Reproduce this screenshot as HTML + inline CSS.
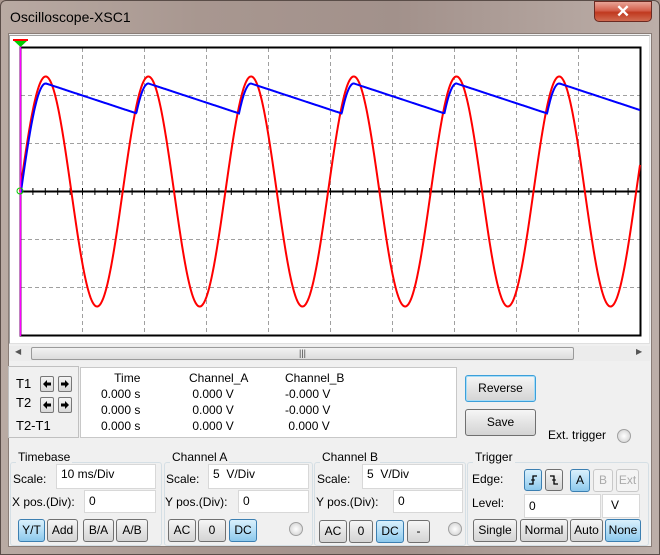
<!DOCTYPE html>
<html><head><meta charset="utf-8"><style>
*{box-sizing:border-box;margin:0;padding:0}
body{width:660px;height:555px;overflow:hidden;background:#a8968e;font-family:"Liberation Sans",sans-serif;font-size:12px;color:#000;position:relative}
.a{position:absolute}
#frame{left:0;top:0;width:660px;height:555px;background:linear-gradient(90deg,#b9aaa3,#a89790 30%,#a2918b 60%,#bcaea8);border:1px solid #5a4d48;border-radius:6px 6px 0 0}
#title{left:10px;top:9px;font-size:14px;color:#000}
#close{left:594px;top:1px;width:58px;height:21px;border:1px solid #6b2a22;border-radius:0 0 5px 5px;background:linear-gradient(#e8a497,#d4604c 45%,#c0391f 55%,#d06a50);color:#fff;font-size:17px;font-weight:bold;text-align:center;line-height:19px}
#body{left:8px;top:33px;width:644px;height:514px;background:#f0f0f0;border:1px solid #8a7d77}
#plotbg{left:9px;top:35px;width:641px;height:309px;background:#fff;border:1px solid #a0a0a0;border-right-color:#e0e0e0;border-bottom-color:#e0e0e0}
.btn{position:absolute;border:1px solid #707070;border-radius:3px;background:linear-gradient(#f6f6f6,#e4e4e4 50%,#d4d4d4);text-align:center;font-size:12px}
.blue{background:linear-gradient(#d9f0fc,#b5def6 50%,#8cc8ec);border-color:#3c7fb1}
.dis{color:#aaa;border-color:#c8c8c8;background:#f4f4f4}
.inp{position:absolute;background:#fff;border:1px solid #d8d8d8;padding-left:4px;font-size:12px}
.grp{position:absolute;border:1px solid #d5dfe5;border-radius:3px}
.gt{position:absolute;background:#f0f0f0;padding:0 2px;font-size:12px}
.radio{position:absolute;width:14px;height:14px;border-radius:50%;border:1px solid #a0a0a0;background:radial-gradient(#fff,#ccc)}
.arr{position:absolute;width:14px;height:16px;border:1px solid #777;border-radius:2px;background:linear-gradient(#f4f4f4,#d8d8d8)}
.arr svg{position:absolute;left:1px;top:2px}
.btn svg{position:absolute;left:3px;top:4px}
</style></head><body>
<div id="frame" class="a"></div>
<div id="title" class="a">Oscilloscope-XSC1</div>
<div id="close" class="a">✕</div>
<div id="body" class="a"></div>
<div id="plotbg" class="a"></div>
<svg class="a" style="left:0;top:0" width="660" height="345" id="sv">
<g stroke="#a0a0a0" stroke-dasharray="4,3" stroke-width="1" id="grid"></g>
<rect x="20.5" y="47.5" width="620" height="288" fill="none" stroke="#000" stroke-width="2"/>
<line x1="20" y1="191.5" x2="640" y2="191.5" stroke="#000" stroke-width="2"/>
<g stroke="#000" id="ticks"></g>
<polyline id="red" fill="none" stroke="#f00" stroke-width="2"/>
<polyline id="blue" fill="none" stroke="#00f" stroke-width="2"/>
<line x1="20.5" y1="40" x2="20.5" y2="336" stroke="#f0f" stroke-width="1.5"/>
<polygon points="13,40 28,40 20.5,47" fill="#0c0"/>
<line x1="13" y1="40" x2="28" y2="40" stroke="#f00" stroke-width="2"/>
<circle cx="20" cy="191" r="3" fill="none" stroke="#0c0"/>
</svg>
<script>
var g=document.getElementById('grid'),t=document.getElementById('ticks'),h='',k;
for(k=1;k<10;k++){var x=20.5+62*k;h+='<line x1="'+x+'" y1="48" x2="'+x+'" y2="335"/>';}
[95.5,143.5,239.5,287.5].forEach(function(y){h+='<line x1="21" y1="'+y+'" x2="640" y2="'+y+'"/>';});
g.innerHTML=h;h='';
for(k=1;k<50;k++){var x=20.5+12.4*k;h+='<line x1="'+x+'" y1="188" x2="'+x+'" y2="195"/>';}
t.innerHTML=h;
var r=[],b=[],hold=0,P=102.7,A=115,x;
for(x=20;x<=640;x+=0.5){var s=A*Math.sin(2*Math.PI*(x-20)/P);r.push(x+','+(191.5-s).toFixed(1));
var d=s-7;if(d>hold)hold=d;else hold-=0.165;if(hold<0)hold=Math.max(hold,0);b.push(x+','+(191.5-hold).toFixed(1));}
document.getElementById('red').setAttribute('points',r.join(' '));
document.getElementById('blue').setAttribute('points',b.join(' '));
</script>
<!-- scrollbar -->
<div class="a" style="left:9px;top:346px;width:641px;height:15px;background:#ececec"></div>
<div class="a" style="left:15px;top:347px;font-size:8px;color:#555">◀</div>
<div class="a" style="left:636px;top:347px;font-size:8px;color:#555">▶</div>
<div class="a" style="left:31px;top:347px;width:543px;height:13px;border:1px solid #9a9a9a;border-radius:2px;background:linear-gradient(#f2f2f2,#dcdcdc);text-align:center;font-size:9px;line-height:11px;color:#444">|||</div>
<!-- cursor panel -->
<div class="a" style="left:8px;top:366px;width:71px;height:72px;border:1px solid #c0c0c0"></div>
<div class="a" style="left:16px;top:376px;font-size:13px">T1</div>
<div class="a" style="left:16px;top:395px;font-size:13px">T2</div>
<div class="a" style="left:16px;top:418px;font-size:13px">T2-T1</div>
<div class="arr" style="left:40px;top:376px"><svg width="10" height="10"><path d="M1 5L5 1V3.5H9V6.5H5V9Z" fill="#000"/></svg></div>
<div class="arr" style="left:58px;top:376px"><svg width="10" height="10"><path d="M9 5L5 1V3.5H1V6.5H5V9Z" fill="#000"/></svg></div>
<div class="arr" style="left:40px;top:397px"><svg width="10" height="10"><path d="M1 5L5 1V3.5H9V6.5H5V9Z" fill="#000"/></svg></div>
<div class="arr" style="left:58px;top:397px"><svg width="10" height="10"><path d="M9 5L5 1V3.5H1V6.5H5V9Z" fill="#000"/></svg></div>
<div class="a" style="left:80px;top:367px;width:377px;height:71px;background:#fff;border:1px solid #c8c8c8"></div>
<div class="a" style="left:101px;top:370px;font-size:12px;line-height:16px;text-align:right">&nbsp; &nbsp; Time<br>0.000 s<br>0.000 s<br>0.000 s</div>
<div class="a" style="left:189px;top:370px;font-size:12px;line-height:16px">Channel_A<br>&nbsp;0.000 V<br>&nbsp;0.000 V<br>&nbsp;0.000 V</div>
<div class="a" style="left:285px;top:370px;font-size:12px;line-height:16px">Channel_B<br>-0.000 V<br>-0.000 V<br>&nbsp;0.000 V</div>
<div class="btn" style="left:465px;top:375px;width:71px;height:27px;line-height:25px;border-color:#3c9fd9;box-shadow:inset 0 0 0 1px #a6dcf7">Reverse</div>
<div class="btn" style="left:465px;top:409px;width:71px;height:27px;line-height:25px">Save</div>
<div class="a" style="left:548px;top:428px">Ext. trigger</div>
<div class="radio" style="left:617px;top:429px"></div>
<!-- groups -->
<div class="grp" style="left:10px;top:462px;width:152px;height:84px"></div><div class="gt" style="left:16px;top:450px">Timebase</div>
<div class="grp" style="left:164px;top:462px;width:149px;height:84px"></div><div class="gt" style="left:170px;top:450px">Channel A</div>
<div class="grp" style="left:314px;top:462px;width:152px;height:84px"></div><div class="gt" style="left:320px;top:450px">Channel B</div>
<div class="grp" style="left:467px;top:462px;width:182px;height:84px"></div><div class="gt" style="left:473px;top:450px">Trigger</div>

<div class="a" style="left:13px;top:472px">Scale:</div>
<div class="inp" style="left:56px;top:464px;width:100px;height:25px;line-height:18px">10 ms/Div</div>
<div class="a" style="left:12px;top:495px">X pos.(Div):</div>
<div class="inp" style="left:84px;top:490px;width:72px;height:23px;line-height:20px">0</div>
<div class="btn blue" style="left:18px;top:519px;width:27px;height:23px;line-height:21px">Y/T</div>
<div class="btn" style="left:47px;top:519px;width:31px;height:23px;line-height:21px">Add</div>
<div class="btn" style="left:83px;top:519px;width:31px;height:23px;line-height:21px">B/A</div>
<div class="btn" style="left:116px;top:519px;width:32px;height:23px;line-height:21px">A/B</div>

<div class="a" style="left:166px;top:472px">Scale:</div>
<div class="inp" style="left:208px;top:464px;width:101px;height:25px;line-height:18px">5 &nbsp;V/Div</div>
<div class="a" style="left:165px;top:495px">Y pos.(Div):</div>
<div class="inp" style="left:238px;top:490px;width:71px;height:23px;line-height:20px">0</div>
<div class="btn" style="left:168px;top:519px;width:28px;height:23px;line-height:21px">AC</div>
<div class="btn" style="left:198px;top:519px;width:28px;height:23px;line-height:21px">0</div>
<div class="btn blue" style="left:229px;top:519px;width:28px;height:23px;line-height:21px">DC</div>
<div class="radio" style="left:289px;top:522px"></div>

<div class="a" style="left:317px;top:472px">Scale:</div>
<div class="inp" style="left:362px;top:464px;width:101px;height:25px;line-height:18px">5 &nbsp;V/Div</div>
<div class="a" style="left:316px;top:495px">Y pos.(Div):</div>
<div class="inp" style="left:393px;top:490px;width:70px;height:23px;line-height:20px">0</div>
<div class="btn" style="left:319px;top:520px;width:28px;height:23px;line-height:21px">AC</div>
<div class="btn" style="left:349px;top:520px;width:24px;height:23px;line-height:21px">0</div>
<div class="btn blue" style="left:376px;top:520px;width:28px;height:23px;line-height:21px">DC</div>
<div class="btn" style="left:407px;top:520px;width:23px;height:23px;line-height:21px">-</div>
<div class="radio" style="left:448px;top:522px"></div>

<div class="a" style="left:472px;top:472px">Edge:</div>
<div class="btn blue" style="left:524px;top:469px;width:18px;height:22px"><svg width="10" height="12"><path d="M1 10H5V2H9" fill="none" stroke="#000" stroke-width="1.3"/><path d="M3 6H7" stroke="#000"/></svg></div>
<div class="btn" style="left:545px;top:469px;width:18px;height:22px"><svg width="10" height="12"><path d="M1 2H5V10H9" fill="none" stroke="#000" stroke-width="1.3"/><path d="M3 6H7" stroke="#000"/></svg></div>
<div class="btn blue" style="left:570px;top:469px;width:20px;height:23px;line-height:21px">A</div>
<div class="btn dis" style="left:593px;top:469px;width:20px;height:23px;line-height:21px">B</div>
<div class="btn dis" style="left:616px;top:469px;width:23px;height:23px;line-height:21px">Ext</div>
<div class="a" style="left:472px;top:496px">Level:</div>
<div class="inp" style="left:524px;top:494px;width:77px;height:24px;line-height:22px">0</div>
<div class="inp" style="left:602px;top:494px;width:38px;height:24px;line-height:20px;padding-left:8px">V</div>
<div class="btn" style="left:473px;top:519px;width:44px;height:23px;line-height:21px">Single</div>
<div class="btn" style="left:520px;top:519px;width:48px;height:23px;line-height:21px">Normal</div>
<div class="btn" style="left:570px;top:519px;width:33px;height:23px;line-height:21px">Auto</div>
<div class="btn blue" style="left:605px;top:519px;width:36px;height:23px;line-height:21px">None</div>
</body></html>
